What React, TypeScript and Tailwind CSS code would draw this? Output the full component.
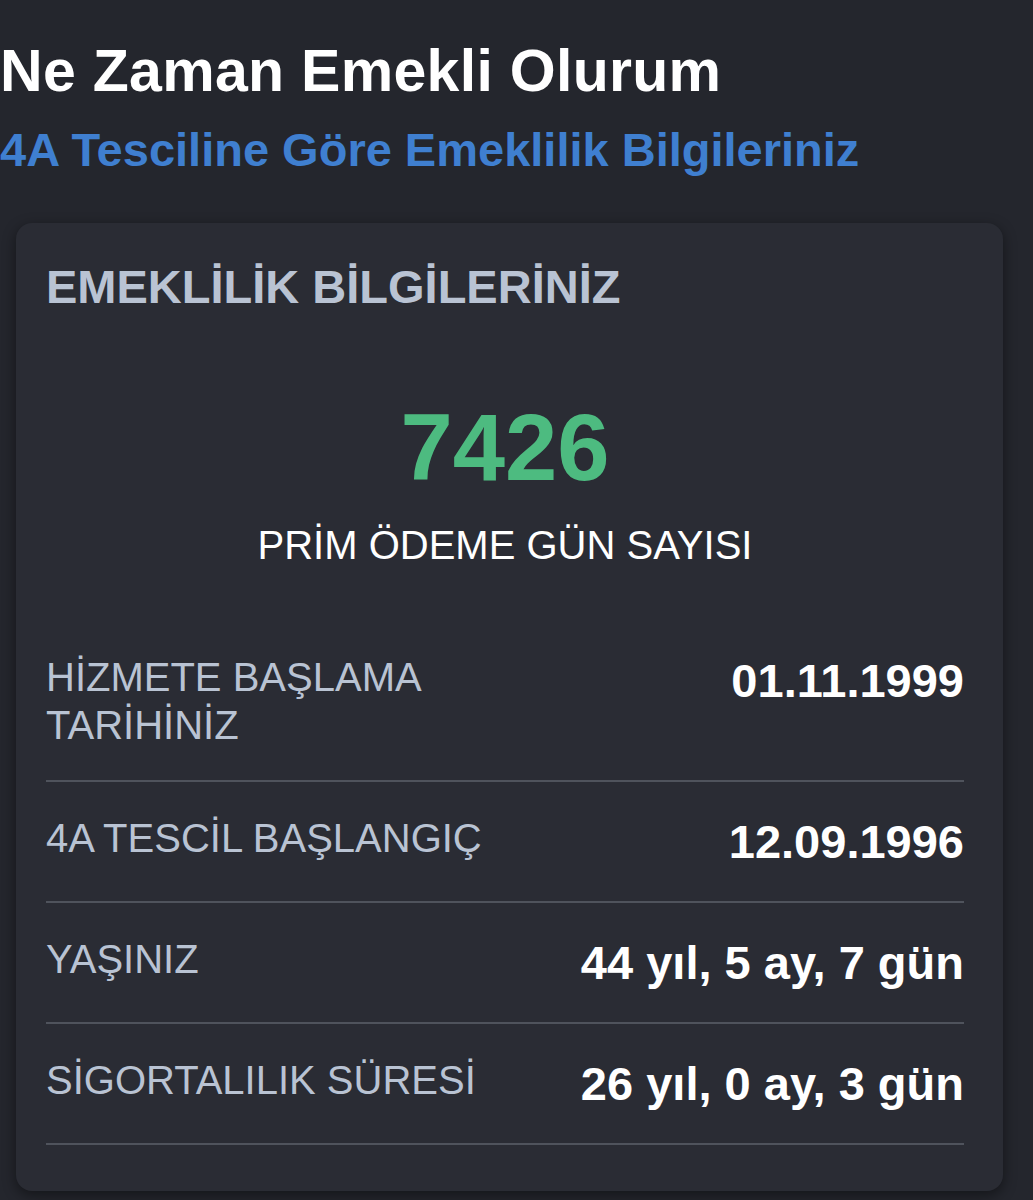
const rows = [
  { label: 'HİZMETE BAŞLAMA TARİHİNİZ', value: '01.11.1999' },
  { label: '4A TESCİL BAŞLANGIÇ', value: '12.09.1996' },
  { label: 'YAŞINIZ', value: '44 yıl, 5 ay, 7 gün' },
  { label: 'SİGORTALILIK SÜRESİ', value: '26 yıl, 0 ay, 3 gün' },
];

function InfoRow({ label, value }: { label: string; value: string }) {
  return (
    <div className="grid grid-cols-2 items-start border-b-2 border-[#4f535c] pb-[31px] pt-8">
      <span className="text-[40px] leading-[48px] text-[#b9c3d3]">{label}</span>
      <span className="text-right text-[47px] font-bold leading-[56px] text-white">{value}</span>
    </div>
  );
}

export default function App() {
  return (
    <div
      className="min-h-screen bg-[#24262d] pb-2 pt-9"
      style={{ fontFamily: '"Liberation Sans", Arial, sans-serif' }}
    >
      <h1 className="text-[59px] font-bold leading-[71px] tracking-[0.3px] text-white">Ne Zaman Emekli Olurum</h1>
      <h2 className="mt-[15px] text-[47px] font-bold leading-[56px] text-[#3f7fd0]">
        4A Tesciline Göre Emeklilik Bilgileriniz
      </h2>

      <section className="ml-4 mr-[30px] mt-[45px] rounded-2xl bg-[#2a2c34] pb-[46px] pl-[30px] pr-[39px] pt-9 shadow-[0_4px_14px_rgba(0,0,0,0.45)]">
        <h3 className="text-[47px] font-bold leading-[56px] text-[#b9c3d3]">EMEKLİLİK BİLGİLERİNİZ</h3>

        <div className="mt-[86px] flex flex-col items-center">
          <span className="text-[94px] font-bold leading-none text-[#4dbb80]">7426</span>
          <span className="mt-[26px] text-[40px] leading-[48px] text-white">PRİM ÖDEME GÜN SAYISI</span>
        </div>

        <div className="mt-[52px]">
          {rows.map((row) => (
            <InfoRow key={row.label} {...row} />
          ))}
        </div>
      </section>
    </div>
  );
}
